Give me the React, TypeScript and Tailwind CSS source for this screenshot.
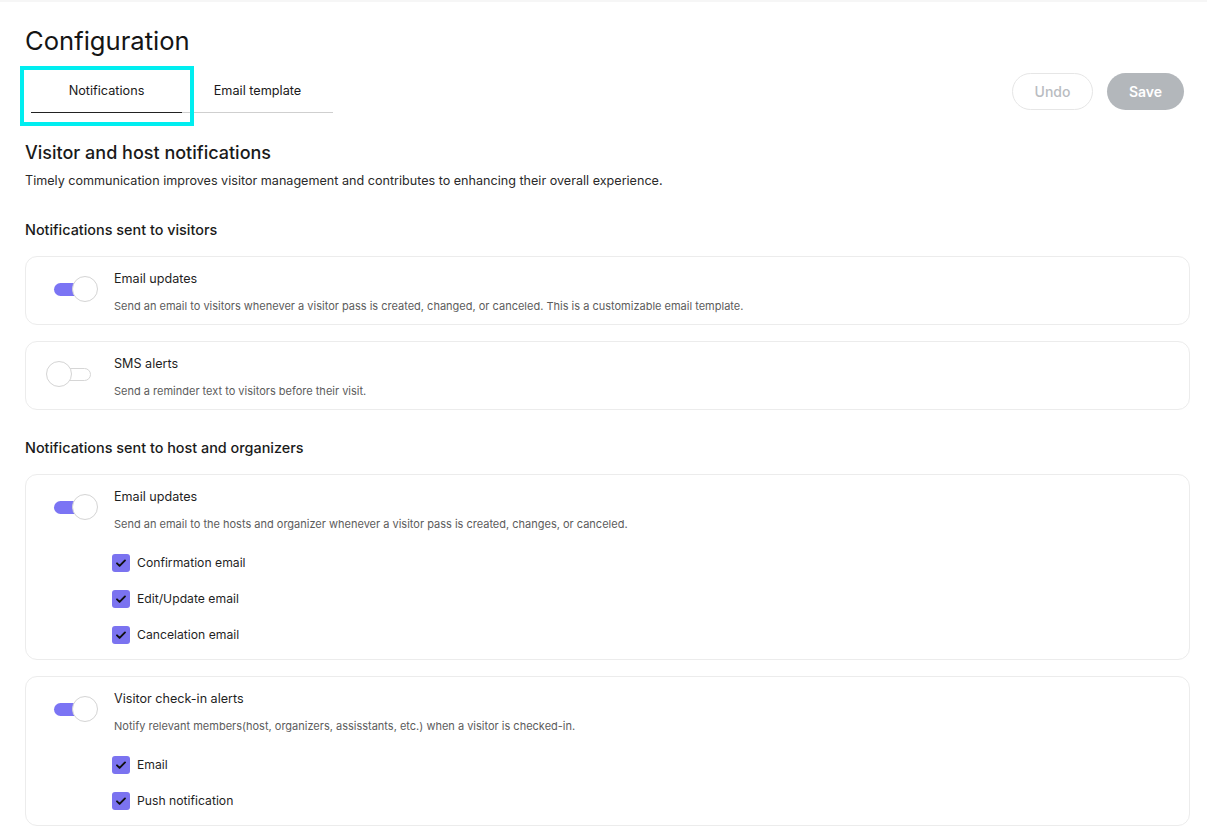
import { useState } from "react";

type Check = { label: string; checked: boolean };

type Item = {
    title: string;
    description: string;
    on: boolean;
    checks?: Check[];
};

const Toggle = ({ on, onClick }: { on: boolean; onClick: () => void }) => (
    <button type="button" onClick={onClick} className="relative w-[52px] h-[26px] shrink-0">
        <span
            className={
                "absolute left-[8px] top-[6.5px] w-[37px] h-[13px] rounded-full " +
                (on ? "bg-[#7b74f4]" : "bg-white border border-[#d6d6d6]")
            }
        />
        <span
            className={
                "absolute top-0 w-[26px] h-[26px] rounded-full bg-white border border-[#d4d4d4] " +
                (on ? "left-[26px]" : "left-0")
            }
        />
    </button>
);

const CheckBox = ({ checked }: { checked: boolean }) => (
    <span
        className={
            "w-[18px] h-[18px] rounded-[3px] flex items-center justify-center shrink-0 " +
            (checked ? "bg-[#7b73f0]" : "bg-white border border-gray-300")
        }
    >
        {checked ? (
            <svg width="12" height="12" viewBox="0 0 12 12" fill="none">
                <path d="M2 6.3l2.6 2.6L10 3.4" stroke="#111" strokeWidth="1.9" strokeLinecap="round" strokeLinejoin="round" />
            </svg>
        ) : null}
    </span>
);

export default function App() {
    const [tab, setTab] = useState(0);
    const [visitors, setVisitors] = useState<Item[]>([
        {
            title: "Email updates",
            description:
                "Send an email to visitors whenever a visitor pass is created, changed, or canceled. This is a customizable email template.",
            on: true,
        },
        {
            title: "SMS alerts",
            description: "Send a reminder text to visitors before their visit.",
            on: false,
        },
    ]);
    const [hosts, setHosts] = useState<Item[]>([
        {
            title: "Email updates",
            description:
                "Send an email to the hosts and organizer whenever a visitor pass is created, changes, or canceled.",
            on: true,
            checks: [
                { label: "Confirmation email", checked: true },
                { label: "Edit/Update email", checked: true },
                { label: "Cancelation email", checked: true },
            ],
        },
        {
            title: "Visitor check-in alerts",
            description: "Notify relevant members(host, organizers, assisstants, etc.) when a visitor is checked-in.",
            on: true,
            checks: [
                { label: "Email", checked: true },
                { label: "Push notification", checked: true },
            ],
        },
    ]);

    const card = (item: Item, i: number, set: (f: (prev: Item[]) => Item[]) => void) => (
        <div
            key={i}
            className="bg-white border border-[#ececec] rounded-[12px] pl-[20px] pr-4 pt-[12px] pb-[10px] flex items-start gap-[16px]"
        >
            <div className="mt-[7px]">
                <Toggle
                    on={item.on}
                    onClick={() => set((prev) => prev.map((p, j) => (j === i ? { ...p, on: !p.on } : p)))}
                />
            </div>
            <div className="min-w-0 flex-1">
                <div className="text-[12.6px] leading-[20px] text-[#1f1f1f]">{item.title}</div>
                <div className="text-[11px] leading-[16px] text-[#5c5c5c] mt-[9px]">{item.description}</div>
                {item.checks ? (
                    <div className="mt-[21px] mb-[4px] flex flex-col gap-[16px] -ml-[2px]">
                        {item.checks.map((c, k) => (
                            <label key={k} className="flex items-center gap-[7px] h-[20px] text-[12.2px] text-[#1f1f1f]">
                                <CheckBox checked={c.checked} />
                                {c.label}
                            </label>
                        ))}
                    </div>
                ) : null}
            </div>
        </div>
    );

    return (
        <div className="min-h-screen bg-white" style={{ fontFamily: "Inter, 'Noto Sans', sans-serif" }}>
            <div className="h-[2px] bg-[#f6f6f6]" />
            <div className="pl-[25px] pr-[17px] pb-6">
                <h1 className="text-[25.6px] leading-[34px] text-[#151515] mt-[22px]">Configuration</h1>

                <div className="flex items-center justify-between mt-[11px]">
                    <div className="flex ml-[6px] border-b border-[#cfcfcf]">
                        {["Notifications", "Email template"].map((t, i) => (
                            <button
                                key={t}
                                type="button"
                                onClick={() => setTab(i)}
                                className={
                                    "relative w-[151px] h-[44px] text-[12.7px] text-[#1a1a1a] -mb-px " +
                                    (tab === i ? "border-b-[1.5px] border-[#222]" : "")
                                }
                            >
                                {t}
                                {i === 0 ? (
                                    <span className="absolute -left-[11px] -right-[12px] -top-[3px] -bottom-[14px] border-[4px] border-[#00eef0] pointer-events-none" />
                                ) : null}
                            </button>
                        ))}
                    </div>
                    <div className="flex items-center gap-[14px] mr-[6px]">
                        <button
                            type="button"
                            className="w-[81px] h-[37px] rounded-full border border-[#e6e6e6] text-[14px] font-medium text-[#b9bcc1]"
                        >
                            Undo
                        </button>
                        <button
                            type="button"
                            className="w-[77px] h-[37px] rounded-full bg-[#b3b7bb] text-[14px] font-semibold text-white"
                        >
                            Save
                        </button>
                    </div>
                </div>

                <h2 className="text-[18px] leading-[24px] font-medium text-[#1a1a1a] mt-[28px]">
                    Visitor and host notifications
                </h2>
                <p className="text-[12.6px] leading-[18px] text-[#2a2a2a] mt-[7px]">
                    Timely communication improves visitor management and contributes to enhancing their overall experience.
                </p>

                <h3 className="text-[14.4px] leading-[20px] font-medium text-[#1a1a1a] mt-[30px]">
                    Notifications sent to visitors
                </h3>
                <div className="flex flex-col gap-[16px] mt-[16px]">
                    {visitors.map((v, i) => card(v, i, setVisitors))}
                </div>

                <h3 className="text-[14.4px] leading-[20px] font-medium text-[#1a1a1a] mt-[28px]">
                    Notifications sent to host and organizers
                </h3>
                <div className="flex flex-col gap-[16px] mt-[16px]">
                    {hosts.map((h, i) => card(h, i, setHosts))}
                </div>
            </div>
        </div>
    );
}
